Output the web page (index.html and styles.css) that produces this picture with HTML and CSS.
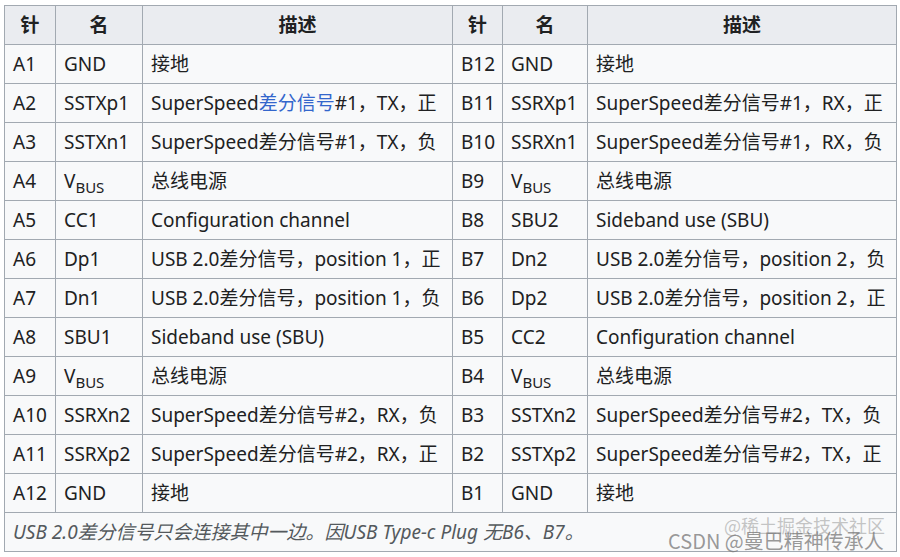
FILE: index.html
```html
<!DOCTYPE html>
<html lang="zh">
<head>
<meta charset="utf-8">
<link rel="stylesheet" href="styles.css">
</head>
<body>
<div class="wrap">
<table class="pins">
<colgroup>
<col class="c-pin"><col class="c-name"><col class="c-desc">
<col class="c-pin2"><col class="c-name2"><col class="c-desc2">
</colgroup>
<thead>
<tr><th>针</th><th>名</th><th>描述</th><th>针</th><th>名</th><th>描述</th></tr>
</thead>
<tbody>
<tr><td>A1</td><td>GND</td><td>接地</td><td>B12</td><td>GND</td><td>接地</td></tr>
<tr><td>A2</td><td>SSTXp1</td><td>SuperSpeed<span class="link">差分信号</span>#1，TX，正</td><td>B11</td><td>SSRXp1</td><td>SuperSpeed差分信号#1，RX，正</td></tr>
<tr><td>A3</td><td>SSTXn1</td><td>SuperSpeed差分信号#1，TX，负</td><td>B10</td><td>SSRXn1</td><td>SuperSpeed差分信号#1，RX，负</td></tr>
<tr><td>A4</td><td>V<sub>BUS</sub></td><td>总线电源</td><td>B9</td><td>V<sub>BUS</sub></td><td>总线电源</td></tr>
<tr><td>A5</td><td>CC1</td><td>Configuration channel</td><td>B8</td><td>SBU2</td><td>Sideband use (SBU)</td></tr>
<tr><td>A6</td><td>Dp1</td><td>USB 2.0差分信号，position 1，正</td><td>B7</td><td>Dn2</td><td>USB 2.0差分信号，position 2，负</td></tr>
<tr><td>A7</td><td>Dn1</td><td>USB 2.0差分信号，position 1，负</td><td>B6</td><td>Dp2</td><td>USB 2.0差分信号，position 2，正</td></tr>
<tr><td>A8</td><td>SBU1</td><td>Sideband use (SBU)</td><td>B5</td><td>CC2</td><td>Configuration channel</td></tr>
<tr><td>A9</td><td>V<sub>BUS</sub></td><td>总线电源</td><td>B4</td><td>V<sub>BUS</sub></td><td>总线电源</td></tr>
<tr><td>A10</td><td>SSRXn2</td><td>SuperSpeed差分信号#2，RX，负</td><td>B3</td><td>SSTXn2</td><td>SuperSpeed差分信号#2，TX，负</td></tr>
<tr><td>A11</td><td>SSRXp2</td><td>SuperSpeed差分信号#2，RX，正</td><td>B2</td><td>SSTXp2</td><td>SuperSpeed差分信号#2，TX，正</td></tr>
<tr><td>A12</td><td>GND</td><td>接地</td><td>B1</td><td>GND</td><td>接地</td></tr>
<tr><td class="note" colspan="6">USB 2.0差分信号只会连接其中一边。因USB Type-c Plug 无B6、B7。</td></tr>
</tbody>
</table>
<div class="wm wm-juejin">@稀土掘金技术社区</div>
<div class="wm wm-csdn">CSDN @曼巴精神传承人</div>
</div>
</body>
</html>
```
FILE: styles.css
```css
html, body {
  margin: 0;
  padding: 0;
  background: #ffffff;
}
body {
  font-family: "Noto Sans", "Noto Sans CJK SC", sans-serif;
  color: #202122;
}
.wrap {
  position: relative;
  width: 900px;
  height: 557px;
  padding: 5px 0 0 4px;
  box-sizing: border-box;
}
.pins {
  border-collapse: collapse;
  table-layout: fixed;
  width: 892px;
  background: #f8f9fa;
  font-size: 19px;
}
.c-pin { width: 51px; }
.c-name { width: 87px; }
.c-desc { width: 310px; }
.c-pin2 { width: 50px; }
.c-name2 { width: 85px; }
.c-desc2 { width: 309px; }
.pins th, .pins td {
  border: 1px solid #a2a9b1;
  height: 39px;
  padding: 0 8px;
  line-height: 22px;
  white-space: nowrap;
  overflow: hidden;
  text-align: left;
  box-sizing: border-box;
}
.pins th {
  background: #eaecf0;
  text-align: center;
  font-weight: 700;
}
.pins sub {
  font-size: 15px;
  vertical-align: -5px;
  line-height: 0;
}
.link {
  color: #3366cc;
}
.pins td.note {
  font-style: italic;
  color: #54595d;
}
.wm {
  position: absolute;
  font-family: "Noto Sans CJK SC", sans-serif;
  white-space: nowrap;
  line-height: 1;
}
.wm-juejin {
  left: 724px;
  top: 516px;
  font-size: 18px;
  color: rgba(150, 150, 150, 0.55);
}
.wm-csdn {
  left: 668px;
  top: 531px;
  font-size: 20px;
  color: rgba(120, 120, 120, 0.75);
}
```
